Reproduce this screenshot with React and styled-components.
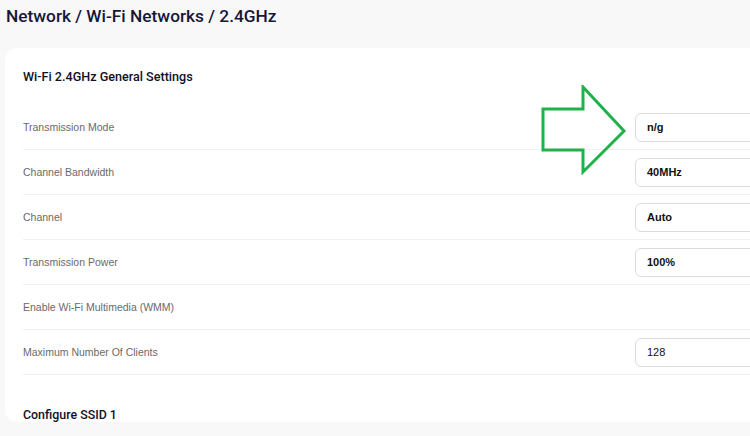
import React from 'react';
import styled, { createGlobalStyle } from 'styled-components';

const GlobalStyle = createGlobalStyle`
  body {
    margin: 0;
    background: #f8f8f8;
    font-family: "Liberation Sans", Arial, sans-serif;
    overflow: hidden;
  }
`;

const Page = styled.div`
  width: 750px;
  height: 436px;
  overflow: hidden;
  padding: 5px 0 0 5px;
  box-sizing: border-box;
`;

const Crumbs = styled.h1`
  margin: 0 0 0 1px;
  font-family: Roboto, "Liberation Sans", sans-serif;
  font-size: 17.3px;
  font-weight: 500;
  color: #16163a;
  line-height: 22px;
`;

const Card = styled.section`
  position: relative;
  margin-top: 21px;
  width: 780px;
  background: #fff;
  border-radius: 12px;
  padding: 20px 0 0 18px;
`;

const CardTitle = styled.h2`
  margin: 0;
  font-family: Roboto, "Liberation Sans", sans-serif;
  font-size: 12.6px;
  font-weight: 500;
  color: #111128;
  line-height: 18px;
`;

const Rows = styled.div`
  margin-top: 19px;
  display: flex;
  flex-direction: column;
`;

const Row = styled.div`
  display: flex;
  align-items: center;
  justify-content: space-between;
  height: 44px;
  border-bottom: 1px solid #f0f0f0;
`;

const Label = styled.span`
  font-size: 10.5px;
  color: #6a6a6a;
`;

const Field = styled.div`
  width: 155px;
  height: 27px;
  border: 1px solid #dcdcdc;
  border-radius: 6px;
  display: flex;
  align-items: center;
  padding-left: 11px;
  box-sizing: content-box;
  font-size: 11px;
  color: #111;
  font-weight: ${(p) => (p.$bold ? 700 : 400)};
`;

const Section = styled.h2`
  margin: 32px 0 0;
  font-family: Roboto, "Liberation Sans", sans-serif;
  font-size: 12.4px;
  font-weight: 500;
  color: #111128;
`;

const Arrow = styled.svg`
  position: absolute;
  left: 536px;
  top: 37px;
`;

const rows = [
  { label: 'Transmission Mode', value: 'n/g', bold: true },
  { label: 'Channel Bandwidth', value: '40MHz', bold: true },
  { label: 'Channel', value: 'Auto', bold: true },
  { label: 'Transmission Power', value: '100%', bold: true },
  { label: 'Enable Wi-Fi Multimedia (WMM)' },
  { label: 'Maximum Number Of Clients', value: '128' },
];

export default function App() {
  return (
    <Page>
      <GlobalStyle />
      <Crumbs>Network / Wi-Fi Networks / 2.4GHz</Crumbs>
      <Card>
        <CardTitle>Wi-Fi 2.4GHz General Settings</CardTitle>
        <Rows>
          {rows.map((r) => (
            <Row key={r.label}>
              <Label>{r.label}</Label>
              {r.value && <Field $bold={r.bold}>{r.value}</Field>}
            </Row>
          ))}
        </Rows>
        <Section>Configure SSID 1</Section>
        <Arrow width="90" height="92" viewBox="0 0 90 92">
          <path
            d="M2 24 H42 V2 L83 46 L42 87 V65 H2 Z"
            fill="none"
            stroke="#20b14a"
            strokeWidth="3"
          />
        </Arrow>
      </Card>
    </Page>
  );
}
